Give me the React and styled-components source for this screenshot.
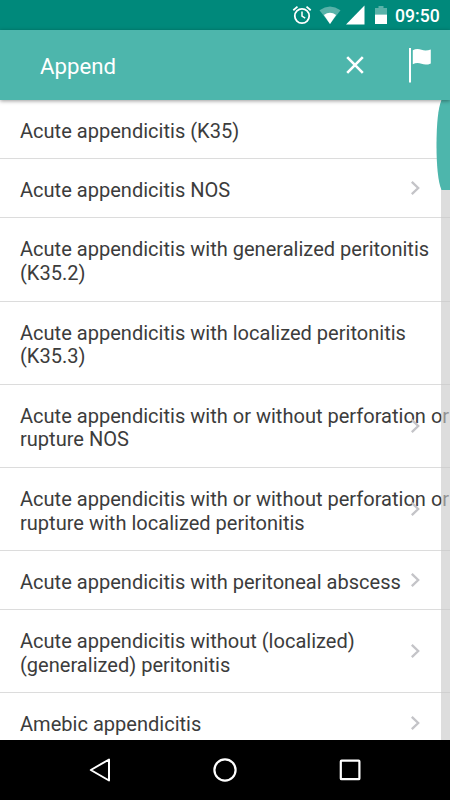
import React from 'react';
import styled, { createGlobalStyle } from 'styled-components';

const GlobalStyle = createGlobalStyle`
  body {
    margin: 0;
    background: #fff;
    font-family: Roboto, "Liberation Sans", sans-serif;
  }
`;

const Screen = styled.div`
  display: flex;
  flex-direction: column;
  width: 450px;
  height: 800px;
  overflow: hidden;
  background: #fff;
`;

const StatusBar = styled.div`
  display: flex;
  flex: 0 0 30px;
  align-items: center;
  justify-content: flex-end;
  box-sizing: border-box;
  padding-right: 10px;
  background: #00897b;
  color: #fff;
`;

const StatusIcons = styled.svg`
  display: block;
  width: 100px;
  height: 30px;
`;

const Clock = styled.span`
  width: 45px;
  margin-left: 5px;
  padding-top: 2px;
  font-size: 17.6px;
  font-weight: 500;
  line-height: 28px;
  white-space: nowrap;
`;

const Toolbar = styled.header`
  display: flex;
  position: relative;
  z-index: 2;
  flex: 0 0 70px;
  align-items: center;
  box-sizing: border-box;
  padding: 0 18px 0 40px;
  background: #4db6ac;
  color: #fff;
  box-shadow: 0 1px 4px rgba(0, 0, 0, 0.4);
`;

const Query = styled.span`
  flex: 1;
  padding-top: 2px;
  font-size: 22.2px;
  line-height: 26px;
`;

const IconButton = styled.button`
  display: flex;
  margin: 0 0 0 ${(props) => props.$gap || 0}px;
  padding: 0;
  border: 0;
  background: none;
  color: inherit;
`;

const Content = styled.main`
  display: flex;
  position: relative;
  flex: 1;
  min-height: 0;
  overflow: hidden;
`;

const List = styled.ul`
  width: 450px;
  margin: -0.4px 0 0;
  padding: 0;
  list-style: none;
`;

const Row = styled.li`
  position: relative;
  box-sizing: border-box;
  height: ${(props) => (props.$lines === 2 ? 83.15 : 59.4)}px;
  padding: 20px 0 0 20px;
  border-bottom: 1px solid #dcdcdc;
  color: #3c3c3c;
  font-size: 20.06px;
  line-height: 23.75px;
  white-space: pre;
`;

const Chevron = styled.svg`
  position: absolute;
  top: calc(50% - 7px);
  right: 29px;
  width: 11px;
  height: 14px;
`;

const ScrollTrack = styled.div`
  position: absolute;
  top: 0;
  right: 0;
  bottom: 0;
  width: 9px;
  background: rgba(200, 200, 200, 0.62);
`;

const ScrollThumb = styled.svg`
  position: absolute;
  top: 0;
  right: 0;
  width: 14px;
  height: 90px;
`;

const NavBar = styled.nav`
  display: flex;
  flex: 0 0 60px;
  align-items: center;
  justify-content: center;
  gap: 101px;
  background: #000;
`;

const items = [
  { lines: ['Acute appendicitis (K35)'] },
  { lines: ['Acute appendicitis NOS'], more: true },
  { lines: ['Acute appendicitis with generalized peritonitis', '(K35.2)'] },
  { lines: ['Acute appendicitis with localized peritonitis', '(K35.3)'] },
  { lines: ['Acute appendicitis with or without perforation or', 'rupture NOS'], more: true },
  {
    lines: ['Acute appendicitis with or without perforation or', 'rupture with localized peritonitis'],
    more: true,
  },
  { lines: ['Acute appendicitis with peritoneal abscess'], more: true },
  { lines: ['Acute appendicitis without (localized)', '(generalized) peritonitis'], more: true },
  { lines: ['Amebic appendicitis'], more: true },
];

function Status() {
  return (
    <StatusBar>
      <StatusIcons viewBox="290 0 100 30">
        {/* alarm */}
        <g fill="none" stroke="#fff" strokeWidth="1.8">
          <circle cx="302" cy="16" r="7.2" />
          <path d="M302 11.5V16.2L305.2 18.2" strokeWidth="1.5" />
          <path d="M293.3 10.2L297.5 6.6M306.5 6.6L310.7 10.2" />
        </g>
        {/* wifi */}
        <path d="M319.5 10.2Q330 2.8 340.5 10.2L330 24Z" fill="#fff" opacity="0.35" />
        <path d="M323.9 15Q330 10.6 336.1 15L330 24Z" fill="#fff" />
        {/* signal */}
        <path d="M364.5 5.5V24.5H346Z" fill="#fff" />
        {/* battery */}
        <path d="M375 14.5V8H378.5V6H383.5V8H387V14.5Z" fill="#fff" opacity="0.35" />
        <path d="M375 14.5H387V24H375Z" fill="#fff" />
      </StatusIcons>
      <Clock>09:50</Clock>
    </StatusBar>
  );
}

function App() {
  return (
    <>
      <GlobalStyle />
      <Screen>
        <Status />
        <Toolbar>
          <Query>Append</Query>
          <IconButton aria-label="Clear">
            <svg width="20" height="20" viewBox="0 0 20 20">
              <path d="M2.2 2.2L17.8 17.8M17.8 2.2L2.2 17.8" stroke="#fff" strokeWidth="2.6" />
            </svg>
          </IconButton>
          <IconButton aria-label="Flag" $gap={43}>
            <svg width="24" height="36" viewBox="0 0 24 36">
              <path d="M1 1H3V35.5H1Z" fill="#fff" />
              <path d="M4.8 3.2Q9 1 13.5 2.8Q18 4.2 22.8 2.4V16.4Q18 18.6 13.5 16.8Q9 15 4.8 17.2Z" fill="#fff" />
            </svg>
          </IconButton>
        </Toolbar>
        <Content>
          <List>
            {items.map((item, index) => (
              <Row key={index} $lines={item.lines.length}>
                {item.lines.join('\n')}
                {item.more && (
                  <Chevron viewBox="0 0 11 14">
                    <path d="M1.8 0.8L8.2 7L1.8 13.2" fill="none" stroke="#c4c4c8" strokeWidth="2.3" />
                  </Chevron>
                )}
              </Row>
            ))}
          </List>
          <ScrollTrack />
          <ScrollThumb viewBox="0 0 14 90">
            <path d="M14 0H5.5C2 8 0.5 25 0.5 45S2 82 5.5 90H14Z" fill="#4db6ac" />
          </ScrollThumb>
        </Content>
        <NavBar>
          <svg width="24" height="26" viewBox="0 0 24 26">
            <path d="M21 2.5V23.5L2.8 13Z" fill="none" stroke="#fff" strokeWidth="2" strokeLinejoin="round" />
          </svg>
          <svg width="24" height="24" viewBox="0 0 24 24">
            <circle cx="12" cy="12" r="10.6" fill="none" stroke="#fff" strokeWidth="2.2" />
          </svg>
          <svg width="24" height="24" viewBox="0 0 24 24">
            <rect x="2.8" y="2.6" width="18.6" height="18.6" rx="0.8" fill="none" stroke="#fff" strokeWidth="2.2" />
          </svg>
        </NavBar>
      </Screen>
    </>
  );
}

export default App;
